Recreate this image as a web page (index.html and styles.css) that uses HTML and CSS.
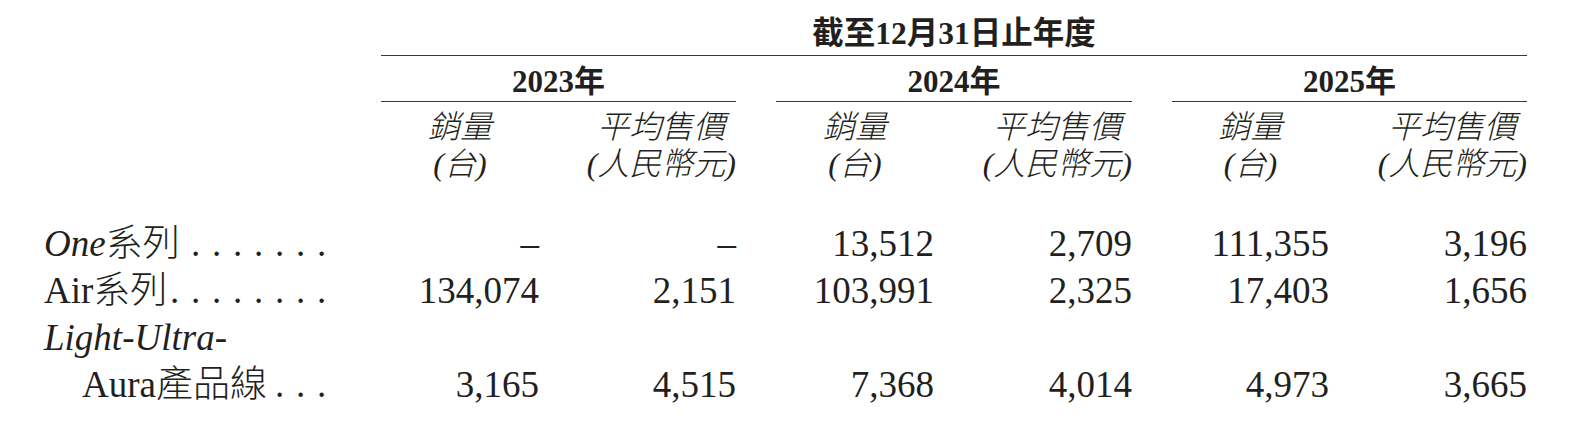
FILE: index.html
```html
<!DOCTYPE html>
<html lang="zh-Hant">
<head>
<meta charset="utf-8">
<link rel="stylesheet" href="styles.css">
</head>
<body>
<div class="table">
  <div class="title">截至12月31日止年度</div>

  <div class="year year-first">2023年</div>
  <div class="year">2024年</div>
  <div class="year">2025年</div>

  <div class="sub-label"></div>
  <div class="sub sub-a"><span class="sub-box">銷量<br>(台)</span></div>
  <div class="sub sub-b"><span class="sub-box">平均售價<br>(人民幣元)</span></div>
  <div class="sub sub-a"><span class="sub-box">銷量<br>(台)</span></div>
  <div class="sub sub-b"><span class="sub-box">平均售價<br>(人民幣元)</span></div>
  <div class="sub sub-a"><span class="sub-box">銷量<br>(台)</span></div>
  <div class="sub sub-b"><span class="sub-box">平均售價<br>(人民幣元)</span></div>

  <div class="label first-row"><span><i>One</i><span class="cjk">系列</span></span><span class="dots">.......</span></div>
  <div class="num first-row">–</div>
  <div class="num first-row">–</div>
  <div class="num first-row">13,512</div>
  <div class="num first-row">2,709</div>
  <div class="num first-row">111,355</div>
  <div class="num first-row">3,196</div>

  <div class="label"><span>Air<span class="cjk">系列</span></span><span class="dots">........</span></div>
  <div class="num">134,074</div>
  <div class="num">2,151</div>
  <div class="num">103,991</div>
  <div class="num">2,325</div>
  <div class="num">17,403</div>
  <div class="num">1,656</div>

  <div class="label"><span><i>Light-Ultra-</i></span></div>
  <div class="num"></div>
  <div class="num"></div>
  <div class="num"></div>
  <div class="num"></div>
  <div class="num"></div>
  <div class="num"></div>

  <div class="label label-indent"><span>Aura<span class="cjk">產品線</span></span><span class="dots">...</span></div>
  <div class="num">3,165</div>
  <div class="num">4,515</div>
  <div class="num">7,368</div>
  <div class="num">4,014</div>
  <div class="num">4,973</div>
  <div class="num">3,665</div>
</div>
</body>
</html>
```

FILE: styles.css
```css
html, body {
  margin: 0;
  padding: 0;
  background: #ffffff;
}

body {
  color: #231f20;
  font-family: "Liberation Serif", "Noto Sans CJK TC", serif;
}

.table {
  display: grid;
  grid-template-columns: 341px 198px 197px 198px 198px 197px 198px;
  width: 1574px;
}

.title {
  grid-column: 2 / span 6;
  margin-left: 40px;
  padding-top: 16px;
  padding-bottom: 3px;
  height: 36px;
  line-height: 36px;
  font-size: 31.5px;
  font-weight: bold;
  text-align: center;
  border-bottom: 1.5px solid #3a3a3a;
}

.year {
  grid-column: span 2;
  margin-left: 40px;
  padding-top: 8px;
  padding-bottom: 1px;
  height: 36px;
  line-height: 36px;
  font-size: 31px;
  font-weight: bold;
  text-align: center;
  border-bottom: 1.5px solid #3a3a3a;
}

.year-first {
  grid-column: 2 / span 2;
}

.sub-label {
  grid-column: 1;
}

.sub {
  padding-top: 7px;
  font-size: 32px;
  line-height: 37px;
  font-style: italic;
  font-weight: 300;
}

.sub-a {
  padding-left: 40px;
  text-align: center;
}

.sub-b {
  text-align: right;
}

.sub-box {
  display: inline-block;
  text-align: center;
}

.label {
  display: flex;
  justify-content: space-between;
  align-items: baseline;
  padding-left: 44px;
  padding-right: 3px;
  font-size: 37px;
  line-height: 47px;
  height: 47px;
  white-space: nowrap;
}

.label i {
  font-style: italic;
}

.cjk {
  font-weight: 300;
}

.label-indent {
  padding-left: 82px;
}

.dots {
  letter-spacing: 11.75px;
}

.num {
  font-size: 37px;
  line-height: 47px;
  height: 47px;
  text-align: right;
  white-space: nowrap;
}

.first-row {
  margin-top: 37px;
}
```
